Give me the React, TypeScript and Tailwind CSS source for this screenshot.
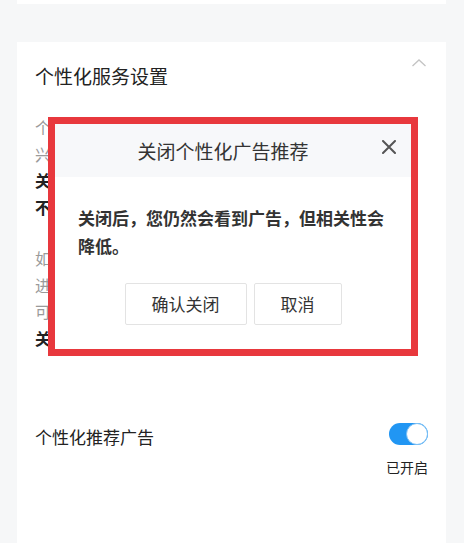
import React from "react";

const font = { fontFamily: '"Noto Sans CJK SC", "Noto Sans", sans-serif' };

export default function App() {
  return (
    <div
      className="relative w-[464px] h-[543px] overflow-hidden bg-[#f6f7f8] pl-[17px] pr-[18px]"
      style={font}
    >
      <div className="h-[4px] bg-white" />
      <div className="mt-[38px] h-[501px] bg-white pl-[18px] pr-[18px]">
        <div className="flex items-start justify-between pt-[20px]">
          <div className="text-[19px] leading-[28px] text-[#222]">个性化服务设置</div>
          <svg width="16" height="10" viewBox="0 0 16 10" className="mt-[-4px] mr-[1px]">
            <path d="M1.5 8 L8 2 L14.5 8" fill="none" stroke="#c4c4c4" strokeWidth="1.3" />
          </svg>
        </div>
        <div className="mt-[24px] text-[16px] leading-[26.5px]">
          <div className="whitespace-nowrap overflow-hidden text-[#9a9a9a]">个性化服务会根据您的使用习惯，为您推荐您可能感</div>
          <div className="whitespace-nowrap overflow-hidden text-[#9a9a9a]">
            兴趣的内容和广告，提升您的使用体验。<span className="font-bold text-[#222]">关闭个</span>
          </div>
          <div className="whitespace-nowrap overflow-hidden font-bold text-[#222]">关闭后，我们将不再为您推荐个性化的内容和广</div>
          <div className="whitespace-nowrap overflow-hidden font-bold text-[#222]">不会影响您正常使用各项功能。</div>
        </div>
        <div className="mt-[25px] text-[16px] leading-[26.5px]">
          <div className="whitespace-nowrap overflow-hidden text-[#9a9a9a]">如您希望关闭个性化推荐广告，您可以在下方开关</div>
          <div className="whitespace-nowrap overflow-hidden text-[#9a9a9a]">进行设置，关闭后您看到的广告数量不会减少，但</div>
          <div className="whitespace-nowrap overflow-hidden text-[#9a9a9a]">可能与您的兴趣相关性降低。</div>
          <div className="whitespace-nowrap overflow-hidden font-bold text-[#222]">关闭后设置将立即生效。</div>
        </div>
        <div className="mt-[72px] flex items-start justify-between">
          <div className="mt-[2px] text-[17px] leading-[24px] text-[#222]">个性化推荐广告</div>
          <div className="flex flex-col items-end">
            <div className="relative h-[22px] w-[39px] rounded-full bg-[#2196f3]">
              <div className="absolute right-0 top-0 h-[22px] w-[22px] rounded-full border-[1.5px] border-[#7cc0f5] bg-white" />
            </div>
            <div className="mt-[12px] text-[14px] leading-[20px] text-[#222]">已开启</div>
          </div>
        </div>
      </div>

      {/* Dialog overlay with red highlight frame */}
      <div className="absolute left-[48px] top-[117px] h-[239px] w-[370px] border-[7px] border-[#e8383d] bg-white">
        <div className="relative flex h-[53px] items-center justify-center bg-[#f7f8fa] pr-[20px]">
          <div className="text-[19px] leading-[28px] text-[#333]">关闭个性化广告推荐</div>
          <svg
            width="14"
            height="14"
            viewBox="0 0 14 14"
            className="absolute right-[15px] top-[16px]"
          >
            <path d="M1 1 L13 13 M13 1 L1 13" stroke="#555" strokeWidth="2" strokeLinecap="round" />
          </svg>
        </div>
        <div className="pl-[23px] pt-[27px] text-[17px] font-bold leading-[28px] text-[#333]">
          关闭后，您仍然会看到广告，但相关性会
          <br />
          降低。
        </div>
        <div className="mt-[23px] flex justify-center gap-[7px]">
          <div className="flex h-[42px] w-[122px] items-center justify-center rounded-[2px] border border-[#e3e3e3] text-[17px] text-[#333]">
            确认关闭
          </div>
          <div className="flex h-[42px] w-[88px] items-center justify-center rounded-[2px] border border-[#e3e3e3] text-[17px] text-[#333]">
            取消
          </div>
        </div>
      </div>
    </div>
  );
}
